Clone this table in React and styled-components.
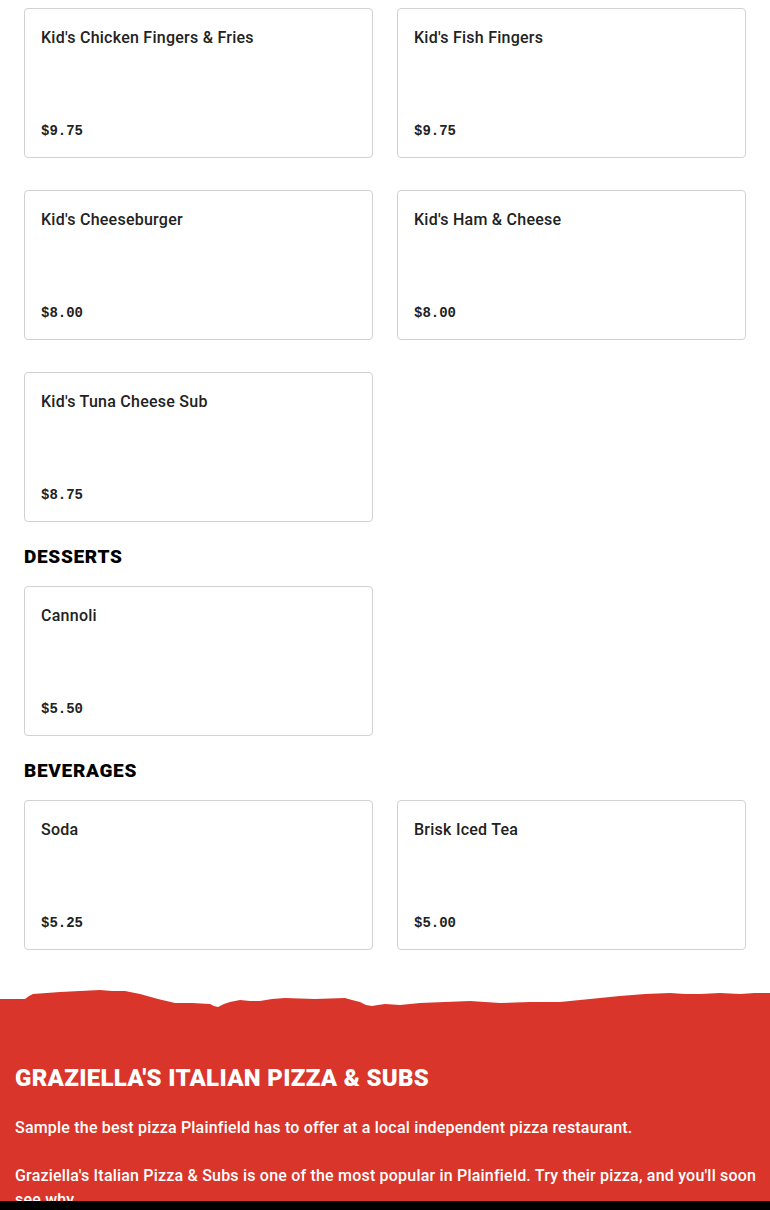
import React from 'react';
import styled, { createGlobalStyle } from 'styled-components';

const GlobalStyle = createGlobalStyle`
  body {
    margin: 0;
    background: #fff;
    font-family: Roboto, 'Liberation Sans', sans-serif;
    color: #222;
  }
`;

const Main = styled.main`
  padding: 8px 24px 0;
`;

const Heading = styled.h2`
  margin: 23px 0 17px;
  font-size: 19px;
  line-height: 24px;
  font-weight: 900;
  letter-spacing: 0.7px;
  color: #000;
  text-transform: uppercase;
`;

const Grid = styled.div`
  display: grid;
  grid-template-columns: 1fr 1fr;
  gap: 32px 24px;
`;

const Card = styled.div`
  box-sizing: border-box;
  height: 150px;
  padding: 17px 16px 16px;
  border: 1px solid #d2d2d2;
  border-radius: 4px;
  display: flex;
  flex-direction: column;
  justify-content: space-between;
`;

const ItemName = styled.div`
  font-size: 16px;
  line-height: 24px;
  font-weight: 500;
  letter-spacing: 0.25px;
  color: #222;
`;

const Price = styled.div`
  font-family: 'Liberation Mono', 'DejaVu Sans Mono', monospace;
  font-size: 14px;
  line-height: 20px;
  font-weight: 700;
  color: #222;
`;

const Footer = styled.footer`
  margin-top: 38px;
  color: #fff;
`;

const Wave = styled.svg`
  display: block;
  width: 100%;
  height: 22px;
`;

const FooterBody = styled.div`
  background: #d9352a;
  padding: 53px 8px 40px 15px;
`;

const FooterTitle = styled.h3`
  margin: 0 0 23px;
  font-size: 24px;
  line-height: 30px;
  font-weight: 900;
  letter-spacing: 0.3px;
  text-transform: uppercase;
`;

const FooterText = styled.p`
  margin: 0 0 24px;
  font-size: 16px;
  line-height: 24px;
  font-weight: 500;
  letter-spacing: 0.2px;
`;

const BottomBar = styled.div`
  position: fixed;
  left: 0;
  right: 0;
  bottom: 0;
  height: 9px;
  background: #000;
`;

const sections = [
  {
    title: null,
    items: [
      ["Kid's Chicken Fingers & Fries", '$9.75'],
      ["Kid's Fish Fingers", '$9.75'],
      ["Kid's Cheeseburger", '$8.00'],
      ["Kid's Ham & Cheese", '$8.00'],
      ["Kid's Tuna Cheese Sub", '$8.75'],
    ],
  },
  { title: 'Desserts', items: [['Cannoli', '$5.50']] },
  {
    title: 'Beverages',
    items: [
      ['Soda', '$5.25'],
      ['Brisk Iced Tea', '$5.00'],
    ],
  },
];

const App = () => (
  <>
    <GlobalStyle />
    <Main>
      {sections.map((s, i) => (
        <section key={i}>
          {s.title && <Heading>{s.title}</Heading>}
          <Grid>
            {s.items.map(([name, price]) => (
              <Card key={name}>
                <ItemName>{name}</ItemName>
                <Price>{price}</Price>
              </Card>
            ))}
          </Grid>
        </section>
      ))}
    </Main>
    <Footer>
      <Wave viewBox="0 0 770 22" preserveAspectRatio="none">
        <path
          fill="#d9352a"
          d="M0 11 L25 11 L29 8 L33 6 L60 4 L100 2 L112 3 L125 3 L140 6 L158 11 L175 15 L192 15 L210 16 L214 18 L218 19 L224 16 L230 14 L240 12 L250 13 L260 13 L272 11 L285 10 L315 11 L345 10 L352 12 L360 14 L366 17 L372 18 L378 17 L385 16 L400 17 L420 15 L445 14 L470 13 L485 14 L500 15 L530 14 L560 14 L590 11 L620 8 L645 6 L670 5 L685 6 L700 6 L720 5 L740 6 L755 5 L770 5 L770 22 L0 22 Z"
        />
      </Wave>
      <FooterBody>
        <FooterTitle>Graziella's Italian Pizza &amp; Subs</FooterTitle>
        <FooterText>
          Sample the best pizza Plainfield has to offer at a local independent pizza restaurant.
        </FooterText>
        <FooterText>
          Graziella's Italian Pizza &amp; Subs is one of the most popular in Plainfield. Try their pizza, and you'll soon see why.
        </FooterText>
      </FooterBody>
    </Footer>
    <BottomBar />
  </>
);

export default App;
